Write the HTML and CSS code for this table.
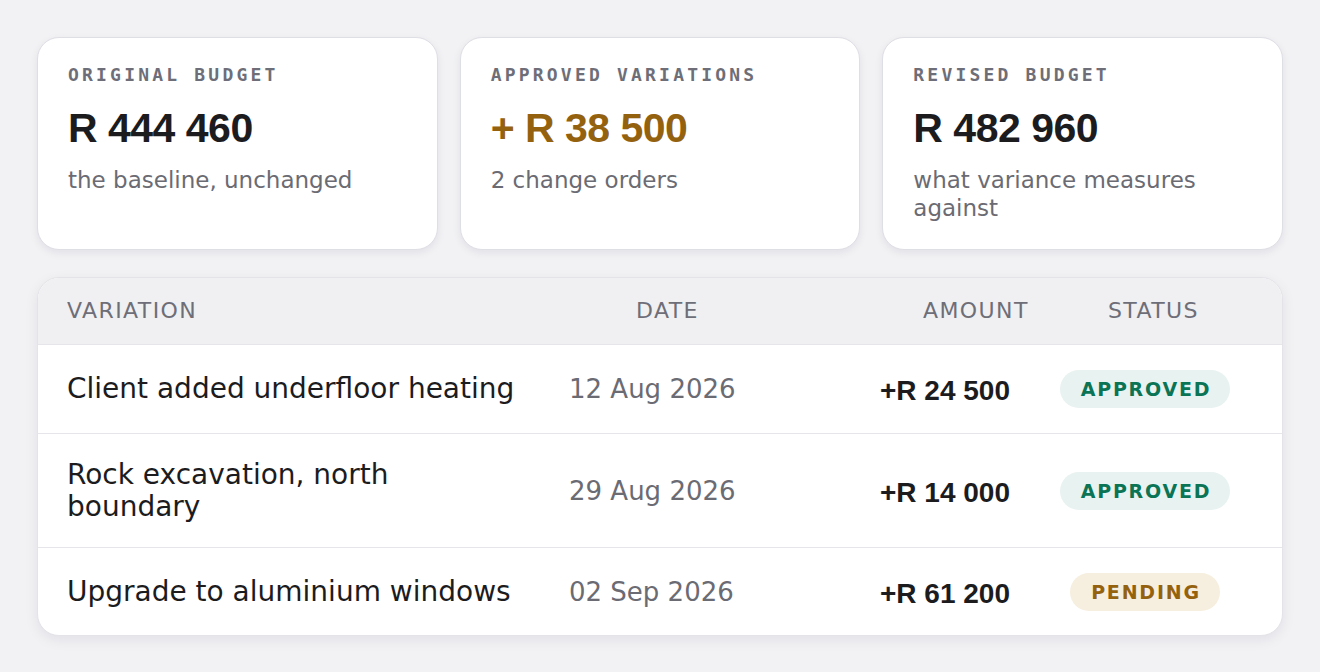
FILE: index.html
```html
<!DOCTYPE html>
<html lang="en">
<head>
<meta charset="utf-8">
<title>Variations</title>
<link rel="stylesheet" href="styles.css">
</head>
<body>
<main class="page">
  <section class="cards">
    <div class="card">
      <div class="card-label">ORIGINAL BUDGET</div>
      <div class="card-value">R 444 460</div>
      <div class="card-note">the baseline, unchanged</div>
    </div>
    <div class="card">
      <div class="card-label">APPROVED VARIATIONS</div>
      <div class="card-value accent">+ R 38 500</div>
      <div class="card-note">2 change orders</div>
    </div>
    <div class="card">
      <div class="card-label">REVISED BUDGET</div>
      <div class="card-value">R 482 960</div>
      <div class="card-note">what variance measures against</div>
    </div>
  </section>

  <section class="table">
    <div class="thead">
      <div class="th">VARIATION</div>
      <div class="th">DATE</div>
      <div class="th">AMOUNT</div>
      <div class="th">STATUS</div>
    </div>
    <div class="row">
      <div class="cell name">Client added underfloor heating</div>
      <div class="cell date">12 Aug 2026</div>
      <div class="cell amount">+R 24 500</div>
      <div class="cell status"><span class="badge approved">APPROVED</span></div>
    </div>
    <div class="row">
      <div class="cell name">Rock excavation, north boundary</div>
      <div class="cell date">29 Aug 2026</div>
      <div class="cell amount">+R 14 000</div>
      <div class="cell status"><span class="badge approved">APPROVED</span></div>
    </div>
    <div class="row">
      <div class="cell name">Upgrade to aluminium windows</div>
      <div class="cell date">02 Sep 2026</div>
      <div class="cell amount">+R 61 200</div>
      <div class="cell status"><span class="badge pending">PENDING</span></div>
    </div>
  </section>
</main>
</body>
</html>
```

FILE: styles.css
```css
* { box-sizing: border-box; }

html, body {
  margin: 0;
  background: #f2f2f5;
}

body {
  font-family: "DejaVu Sans", sans-serif;
  color: #1c1c1e;
}

.page {
  padding: 37px;
}

.cards {
  display: grid;
  grid-template-columns: repeat(3, 1fr);
  gap: 22px;
}

.card {
  background: #ffffff;
  border: 1px solid #dedee5;
  border-radius: 22px;
  padding: 26px 30px 27px;
  box-shadow: 0 3px 8px rgba(20, 20, 40, 0.07);
}

.card-label {
  font-family: "DejaVu Sans Mono", monospace;
  font-weight: bold;
  font-size: 18px;
  line-height: 21px;
  letter-spacing: 3.2px;
  color: #6e6e78;
  margin-bottom: 21px;
}

.card-value {
  font-family: "Liberation Sans", Arial, sans-serif;
  font-weight: bold;
  font-size: 41px;
  line-height: 44px;
  letter-spacing: -0.5px;
  color: #1c1c1e;
  margin-bottom: 16px;
}

.card-value.accent {
  color: #94620f;
}

.card-note {
  font-size: 23px;
  line-height: 28px;
  color: #6b6b73;
}

.table {
  margin-top: 27px;
  background: #ffffff;
  border: 1px solid #e3e3e8;
  border-radius: 22px;
  overflow: hidden;
  box-shadow: 0 4px 14px rgba(20, 20, 40, 0.07);
}

.thead {
  display: grid;
  grid-template-columns: 569px 287px 185px 1fr;
  padding: 20px 2px 20px 29px;
  background: #f0f0f3;
  border-bottom: 1px solid #e6e6ea;
}

.th {
  font-size: 22px;
  line-height: 26px;
  letter-spacing: 1.4px;
  color: #6e6e78;
}

.row {
  display: grid;
  grid-template-columns: 502px 280px 161px 1fr;
  align-items: center;
  padding: 25px 2px 25px 29px;
  border-top: 1px solid #e6e6ea;
}

.thead + .row {
  border-top: none;
}

.row:last-child {
  padding-bottom: 24px;
}

.cell.name {
  font-size: 28px;
  line-height: 31.5px;
  color: #1c1c1e;
  padding-right: 48px;
}

.cell.date {
  font-size: 26px;
  line-height: 32px;
  color: #6b6b73;
}

.cell.amount {
  font-family: "Liberation Sans", Arial, sans-serif;
  font-weight: bold;
  font-size: 28px;
  line-height: 32px;
  text-align: right;
  color: #1c1c1e;
  padding-top: 4px;
}

.cell.status {
  text-align: center;
}

.badge {
  display: inline-block;
  font-weight: bold;
  font-size: 19px;
  line-height: 22px;
  letter-spacing: 1.8px;
  padding: 8px 19px 8px 21px;
  border-radius: 999px;
}

.badge.approved {
  color: #0b7455;
  background: #e8f2f0;
}

.badge.pending {
  color: #94620f;
  background: #f6efdf;
}
```
